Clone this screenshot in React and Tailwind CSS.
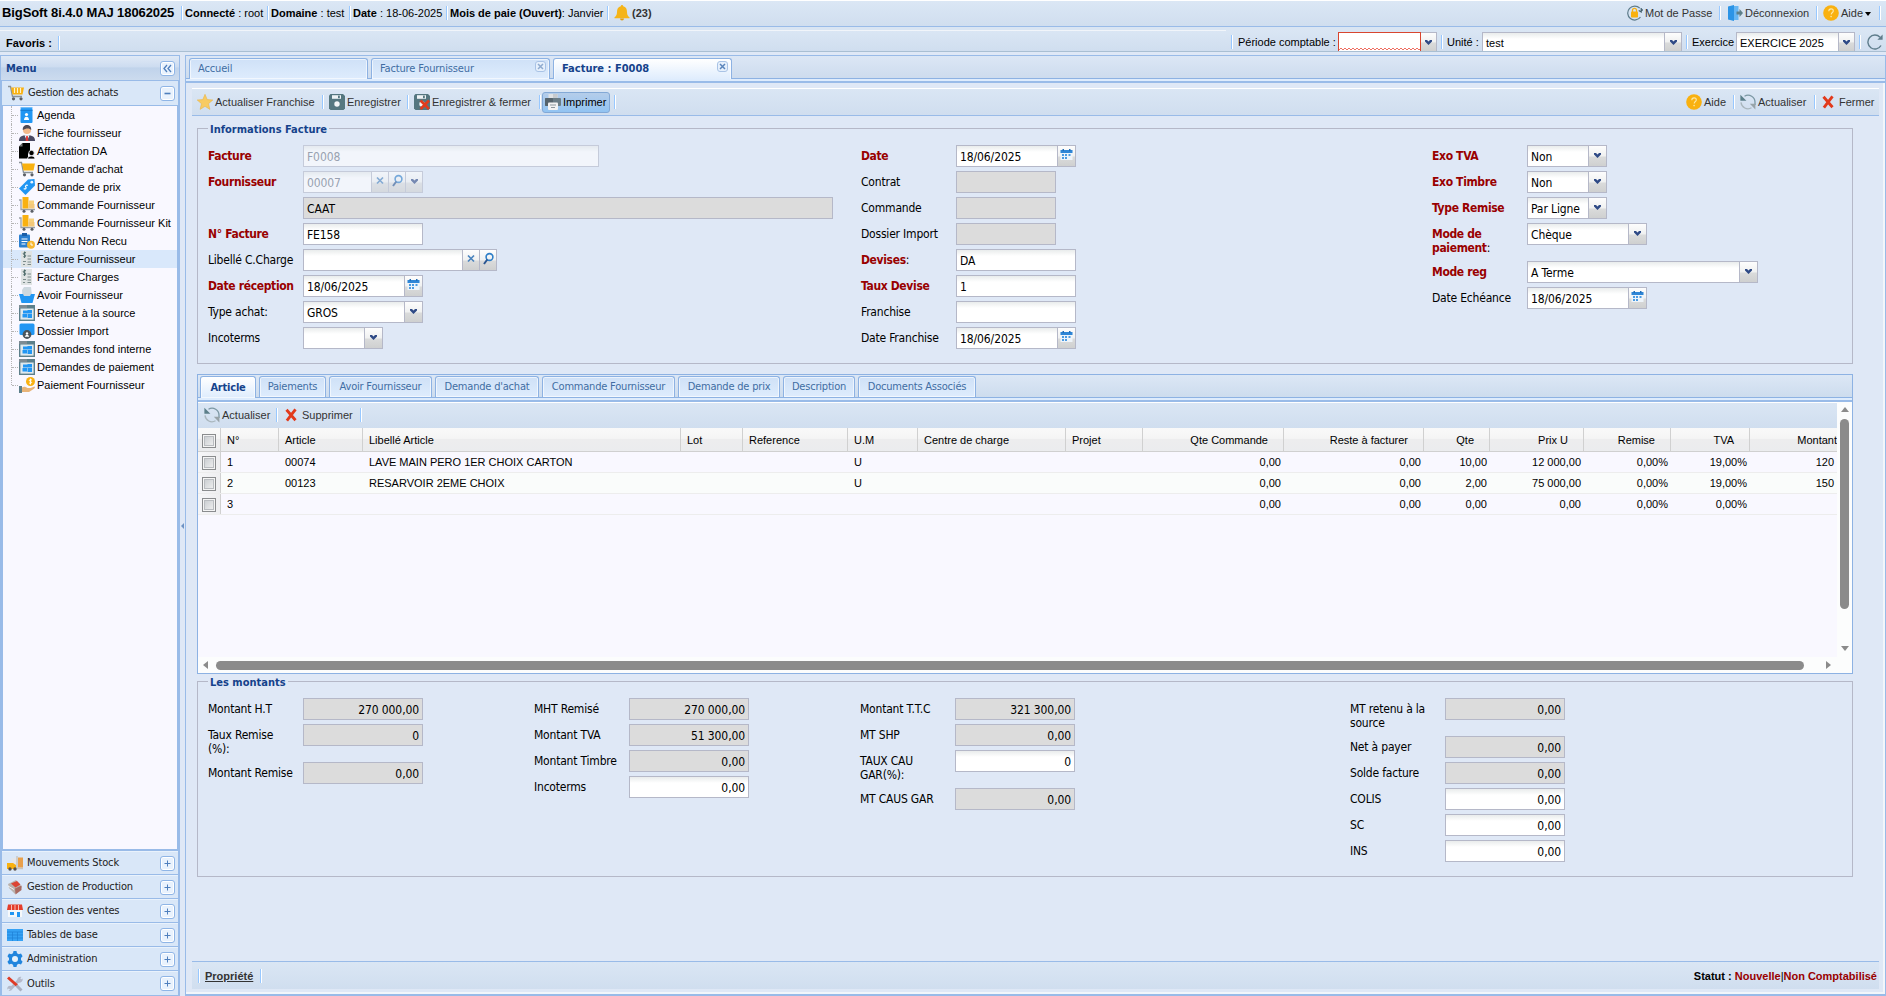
import React, { useState } from "react";

const TAHOMA = "font-['DejaVu_Sans_Condensed','DejaVu_Sans',sans-serif]";

/* ---------- icons ---------- */

const Svg = ({ size = 16, children, className = "" }) => (
  <svg width={size} height={size} viewBox="0 0 16 16" className={`shrink-0 ${className}`} fill="none">
    {children}
  </svg>
);

const HelpIcon = () => (
  <Svg>
    <circle cx="8" cy="8" r="7.8" fill="#f9b110" />
    <path d="M5.8 6.2c0-1.5 1-2.3 2.3-2.3s2.2.8 2.2 2c0 1.5-2.1 1.7-2.1 3.5" stroke="#fde9a8" strokeWidth="1.1" />
    <circle cx="8.1" cy="11.6" r=".8" fill="#fde9a8" />
  </Svg>
);

const RefreshIcon = () => (
  <Svg>
    <path d="M4.5 2.2A7 7 0 0 1 15 8.6V11" stroke="#7b97a3" strokeWidth="1.3" />
    <path d="M.4.8v6h6z" fill="#5c7f8a" />
    <path d="M11.5 13.8A7 7 0 0 1 1 8.4" stroke="#a9b6bd" strokeWidth="1.3" />
    <path d="M15.4 15.4v-5.6h-5.6z" fill="#98a3a8" />
  </Svg>
);

const ReloadIcon = () => (
  <Svg>
    <path d="M14 11.5A7 7 0 1 1 13 3.2" stroke="#5f7d8c" strokeWidth="1.4" />
    <path d="M15.6.4v5.4h-5.2z" fill="#5f7d8c" />
  </Svg>
);

const CrossIcon = () => (
  <Svg className="w-3">
    <path d="M2 1l12 14M14 .5L2.500 15.500" stroke="#e23a1c" strokeWidth="3.800" />
  </Svg>
);

const StarIcon = () => (
  <Svg>
    <path d="M8 .3l2.2 5.3 5.6.4-4.3 3.7 1.4 5.7L8 12.3l-4.9 3.1 1.4-5.7L.2 6l5.6-.4z" fill="#f8cb62" stroke="#e9b64a" strokeWidth=".6" />
  </Svg>
);

const DiskIcon = ({ cross }) => (
  <Svg>
    <path d="M0 1.5L1.5 0H14l2 2v12.5L14.500 16h-13L0 14.500z" fill="#557780" />
    <rect x="3" y="1.2" width="9" height="3.6" fill="#eef3f5" />
    <rect x="9" y="1.6" width="1.800" height="2.600" fill="#557780" />
    <circle cx="8" cy="10" r="2.700" fill="#f2f5f6" />
    {cross && <path d="M6.500 6.500l8.500 8.500M15 6.500L6.500 15" stroke="#e23a1c" strokeWidth="2.600" />}
  </Svg>
);

const PrinterIcon = () => (
  <Svg>
    <rect x="3.500" y="0" width="9" height="5" fill="#dfe2e5" />
    <rect x="8" y="0" width="4.500" height="5" fill="#c7cbcf" />
    <rect x="0" y="4" width="16" height="8" rx="1" fill="#6b7d87" />
    <rect x="0" y="4" width="8" height="8" rx="1" fill="#56646d" />
    <rect x="3" y="8.500" width="10" height="7.500" rx="1" fill="#f3f3f3" />
    <path d="M5 11h6M6 13.500h4" stroke="#8d979e" />
  </Svg>
);

const LockIcon = () => (
  <Svg>
    <path d="M12.800 3.200A7 7 0 1 0 13.500 12" stroke="#5f7d8c" strokeWidth="1.200" />
    <path d="M14.200 3v4l-2.500-1.500M14.200 6l1.600-1.500" stroke="#44606e" strokeWidth="1.200" />
    <rect x="4" y="6.500" width="7" height="6" rx=".8" fill="#f9b110" />
    <path d="M5.500 7V5.300a2 2 0 0 1 4 0V7" stroke="#f9b110" strokeWidth="1.300" />
  </Svg>
);

const ExitIcon = () => (
  <Svg>
    <path d="M1 1.500L7 0v16l-6-1.500z" fill="#2b94e6" />
    <path d="M7 1h4.500v14H7z" fill="#67b6f2" />
    <path d="M9.500 6.500h3V4l3.500 4-3.500 4V9.500h-3z" fill="#5c7f8a" />
  </Svg>
);

const BellIcon = () => (
  <Svg>
    <path d="M8 0c.8 0 1.200.6 1.200 1.300C12 2 13 4.200 13 7c0 3 1 4.200 2.500 5.300v.9H.5v-.9C2 11.200 3 10 3 7c0-2.800 1-5 3.800-5.700C6.800.6 7.200 0 8 0z" fill="#f5b418" />
    <path d="M6 13.500h4a2 2 0 0 1-4 0z" fill="#e39c0c" />
  </Svg>
);

const CartIcon = ({ open }) => (
  <Svg>
    <path d="M0 1.500h2.500l2 10H14" stroke="#8a9298" strokeWidth="1.300" />
    <path d="M3 2.500h13l-1.500 7H4.500z" fill="#f9b110" />
    {open && <path d="M6.500 3v5M9.500 3v5M12.500 3v5" stroke="#fff2cc" strokeWidth="1.200" />}
    <circle cx="5.500" cy="13.800" r="1.600" fill="#5b5f66" />
    <circle cx="13" cy="13.800" r="1.600" fill="#5b5f66" />
  </Svg>
);

const AgendaIcon = () => (
  <Svg>
    <rect x="1.500" y="1" width="12" height="15" rx="1" fill="#2196f3" />
    <rect x="1.500" y="0" width="12" height="1.200" fill="#74bdf7" />
    <circle cx="7.500" cy="7.500" r="1.600" fill="#fff" />
    <path d="M5 13c0-4.500 5-4.500 5 0z" fill="#fff" />
    <path d="M1.500 3.500h12" stroke="#1777cc" strokeWidth=".8" />
  </Svg>
);

const PersonIcon = () => (
  <Svg>
    <circle cx="8" cy="5" r="4" fill="#f2b98b" />
    <path d="M3.800 5C3.500 1.500 5.500 0 8 0s4.500 1.500 4.200 5C11 3 7 2.800 3.800 5z" fill="#4f4a55" />
    <path d="M0 16c0-4.500 2.500-5.800 8-5.800s8 1.300 8 5.800z" fill="#4b4a63" />
    <path d="M5.500 10.300h5L8 16z" fill="#fff" />
    <path d="M7.200 11h1.600l.6 5H6.600z" fill="#e33a3a" />
  </Svg>
);

const AffectIcon = () => (
  <Svg>
    <path d="M3.500 0H11v8l-2 3v4.500H0V3.500z" fill="#000" />
    <path d="M0 3.500L3.500 0v3.500z" fill="#777" />
    <circle cx="12.500" cy="10" r="2.700" fill="#000" stroke="#f9f8ff" strokeWidth=".8" />
    <path d="M8.500 16c0-4 7.500-4 7.500 0z" fill="#000" stroke="#f9f8ff" strokeWidth=".8" />
  </Svg>
);

const TagIcon = () => (
  <Svg>
    <path d="M9 .5L15.500 0 16 6.500 6.500 16 0 9.500z" fill="#2196f3" />
    <circle cx="12.800" cy="3.200" r="1.400" fill="#e9f5ff" />
    <path d="M8.800 6.500c-1.500-1-3 .6-2 1.700s-.6 2.500-2 1.300" stroke="#fff" strokeWidth="1.200" />
  </Svg>
);

const OrderIcon = () => (
  <Svg>
    <path d="M0 3h2v9.500h14" stroke="#9aa0a6" strokeWidth="1.300" />
    <rect x="3.500" y="0" width="6" height="11.500" fill="#f9b110" />
    <rect x="10" y="3.500" width="5" height="3.500" fill="#f6d07c" />
    <rect x="9.500" y="7" width="6" height="4.500" fill="#f3c87a" />
    <circle cx="5" cy="14.300" r="1.500" fill="#5b5f66" />
    <circle cx="13" cy="14.300" r="1.500" fill="#5b5f66" />
  </Svg>
);

const AttenduIcon = () => (
  <Svg>
    <rect x="0" y="1.500" width="11" height="13" rx="1" fill="#2b7fd0" />
    <rect x="3" y="0" width="5" height="3" fill="#1d5fa8" />
    <path d="M2.500 6h6M2.500 8.500h6M2.500 11h4" stroke="#fff" strokeWidth="1.100" />
    <circle cx="12" cy="11.800" r="4" fill="#f7b731" />
    <path d="M12 9.500v2.500h2" stroke="#fff" />
  </Svg>
);

const BillIcon = () => (
  <Svg>
    <rect x="2" y="0" width="11" height="16" fill="#dfe3e3" />
    <path d="M7 1.800c-3-1-3.600 1.700-1.500 2s1.500 2.700-1.200 1.900M5.600.5v6.500" stroke="#4e6b6b" strokeWidth="1" />
    <path d="M8.500 5H12M8.500 8H12M8.500 11H12M8.500 13.500H12M4 10.500h3M4 13.500h2" stroke="#7c8c8c" />
  </Svg>
);

const BasketIcon = () => (
  <Svg>
    <path d="M5 0h7l1 9H3.500L3 3z" fill="#cdd8df" />
    <path d="M0 7h4l1 2h6l1-2h4l-2.500 9h-11z" fill="#2196f3" />
  </Svg>
);

const WindowIcon = () => (
  <Svg>
    <rect x=".7" y=".7" width="14.600" height="14.600" fill="#dfe9ee" stroke="#5c7f8a" strokeWidth="1.400" />
    <rect x="0" y="0" width="16" height="3.500" fill="#5c7f8a" />
    <rect x="0" y="0" width="8" height="3" fill="#7d8b93" />
    <path d="M4 5.500h4.500v3H4zM8.500 5h4.500v3.500H8.500zM3.500 9h4.500v3.500H3.500zM8.500 9h4.500v4H8.500z" fill="#2196f3" />
  </Svg>
);

const DossierIcon = () => (
  <Svg>
    <rect x=".5" y=".5" width="15" height="11.500" rx="1.500" fill="#2196f3" />
    <circle cx="8" cy="11.500" r="4.400" fill="#4a545c" />
    <circle cx="8" cy="10.500" r="1.200" fill="#fff" />
    <path d="M5.800 13.800c0-2.500 4.400-2.500 4.400 0z" fill="#fff" />
  </Svg>
);

const PayIcon = () => (
  <Svg>
    <circle cx="11.500" cy="4.500" r="4.500" fill="#f9b110" />
    <path d="M13 3c-3-1.200-3.500 1-1.500 1.500s1.200 2.500-1.500 1.500M11.500 1.500v6" stroke="#fff" strokeWidth=".9" />
    <rect x="0" y="9" width="3" height="7" fill="#5c7f8a" />
    <path d="M3 10.500c2-1.500 4-.5 5.500.5h3l4-1.500c.8.500.5 1.500-.5 2.200L10 15H3z" fill="#e8b478" />
  </Svg>
);

const StockIcon = () => (
  <Svg>
    <path d="M4.500 3h5v6h-5z" fill="#e4e6ea" />
    <path d="M0 8h6l3 2v4H0z" fill="#f9b110" />
    <path d="M10 1v12.500h6" stroke="#c7c3bd" strokeWidth="1.400" />
    <path d="M11 2.500h5v10h-5z" fill="#e8a04c" />
    <circle cx="3" cy="14" r="1.700" fill="#5b5148" />
    <circle cx="8" cy="14" r="1.700" fill="#5b5148" />
  </Svg>
);

const ProductionIcon = () => (
  <Svg>
    <path d="M1 5l8-4 6 7-7 7-6-6z" fill="#b9b2ad" />
    <path d="M4 4.500l6-2.500 3.500 3.500-5 3z" fill="#dc4432" />
    <path d="M8 9.500l6.500-3V11l-6 4.500z" fill="#a96a60" />
    <path d="M1 7l6 3.500" stroke="#f2f2f2" />
  </Svg>
);

const ShopIcon = () => (
  <Svg>
    <path d="M1 1.500h14L16 7H0z" fill="#e43d2a" />
    <path d="M4.500 2v5M8 2v5M11.500 2v5" stroke="#fbe0dc" strokeWidth=".8" />
    <path d="M1 7h14v7H1z" fill="#f6f8fa" />
    <rect x="3" y="9" width="4" height="3" fill="#2196f3" />
    <rect x="10" y="9" width="3" height="5" fill="#2196f3" />
  </Svg>
);

const TableIcon = () => (
  <Svg>
    <rect x="0" y="2" width="16" height="12" fill="#35a2f5" />
    <path d="M0 5h16M0 8h16M0 11h16M5.500 5v9M10.500 5v9" stroke="#1c7fd6" strokeWidth=".7" />
  </Svg>
);

const GearIcon = () => (
  <Svg>
    <path
      d="M6.500 0h3l.5 2.200 1.800 1 2.200-.7 1.600 2.700L14 6.900v2.200l1.600 1.700-1.600 2.700-2.200-.7-1.800 1-.5 2.200h-3L6 13.800l-1.800-1-2.200.7L.4 10.800 2 9.100V6.900L.4 5.200 2 2.500l2.200.7 1.800-1z"
      fill="#2185dd"
    />
    <circle cx="8" cy="8" r="3" fill="#e6f1fb" />
  </Svg>
);

const ToolsIcon = () => (
  <Svg>
    <path d="M13.500 2.500L3 13.500" stroke="#b4b9c9" strokeWidth="3" />
    <path d="M10.500 5.500c-1-3 1.500-5.500 4-4.500l-2.500 2.500 1 1 2.500-2c1 2.500-2 5-4.500 4zM5 10.500c1 2.500-1 5-3.500 4.500l2-2-1-1L.4 13.600c-.8-2.600 2-5 4.600-3.100z" fill="#b4b9c9" />
    <path d="M1 1.500l9 8" stroke="#df3a24" strokeWidth="3" />
    <path d="M9.500 9.500l5 5" stroke="#a9afc0" strokeWidth="3" />
  </Svg>
);

/* ---------- data ---------- */

const menuItems = [
  { label: "Agenda", icon: <AgendaIcon /> },
  { label: "Fiche fournisseur", icon: <PersonIcon /> },
  { label: "Affectation DA", icon: <AffectIcon /> },
  { label: "Demande d'achat", icon: <CartIcon /> },
  { label: "Demande de prix", icon: <TagIcon /> },
  { label: "Commande Fournisseur", icon: <OrderIcon /> },
  { label: "Commande Fournisseur Kit", icon: <OrderIcon /> },
  { label: "Attendu Non Recu", icon: <AttenduIcon /> },
  { label: "Facture Fournisseur", icon: <BillIcon /> },
  { label: "Facture Charges", icon: <BillIcon /> },
  { label: "Avoir Fournisseur", icon: <BasketIcon /> },
  { label: "Retenue à la source", icon: <WindowIcon /> },
  { label: "Dossier Import", icon: <DossierIcon /> },
  { label: "Demandes fond interne", icon: <WindowIcon /> },
  { label: "Demandes de paiement", icon: <WindowIcon /> },
  { label: "Paiement Fournisseur", icon: <PayIcon /> },
];

const sections = [
  { label: "Mouvements Stock", icon: <StockIcon /> },
  { label: "Gestion de Production", icon: <ProductionIcon /> },
  { label: "Gestion des ventes", icon: <ShopIcon /> },
  { label: "Tables de base", icon: <TableIcon /> },
  { label: "Administration", icon: <GearIcon /> },
  { label: "Outils", icon: <ToolsIcon /> },
];

const detailTabs = [
  { label: "Article", width: "w-[56px]" },
  { label: "Paiements", width: "w-[67px]" },
  { label: "Avoir Fournisseur", width: "w-[103px]" },
  { label: "Demande d'achat", width: "w-[104px]" },
  { label: "Commande Fournisseur", width: "w-[133px]" },
  { label: "Demande de prix", width: "w-[102px]" },
  { label: "Description", width: "w-[72px]" },
  { label: "Documents Associés", width: "w-[118px]" },
];

const headers = ["N°", "Article", "Libellé Article", "Lot", "Reference", "U.M", "Centre de charge", "Projet"];
const numHeaders = ["Qte Commande", "Reste à facturer", "Qte", "Prix U", "Remise", "TVA"];

const rows = [
  {
    text: ["1", "00074", "LAVE MAIN PERO 1ER CHOIX CARTON", "", "", "U", "", ""],
    nums: ["0,00", "0,00", "10,00", "12 000,00", "0,00%", "19,00%", "120"],
  },
  {
    text: ["2", "00123", "RESARVOIR 2EME CHOIX", "", "", "U", "", ""],
    nums: ["0,00", "0,00", "2,00", "75 000,00", "0,00%", "19,00%", "150"],
  },
  {
    text: ["3", "", "", "", "", "", "", ""],
    nums: ["0,00", "0,00", "0,00", "0,00", "0,00%", "0,00%", ""],
  },
];

const GRID =
  "grid grid-cols-[23px_58px_84px_318px_62px_105px_70px_148px_77px_141px_140px_66px_94px_87px_79px_87px]";

/* ---------- small parts ---------- */

const Sep = ({ className = "" }) => (
  <span className={`h-[14px] w-[2px] shrink-0 border-l border-[#98c8ff] bg-white ${className}`} />
);

const ToolButton = ({ icon, children, className = "" }) => (
  <button className={`flex h-[21px] shrink-0 items-center gap-[2px] whitespace-nowrap text-[#333] ${className}`}>
    {icon}
    <span>{children}</span>
  </button>
);

const PanelTool = ({ children }) => (
  <span className="flex size-[15px] shrink-0 items-center justify-center rounded-[3px] border border-[#8fb5e6] bg-[#e9f2fd] shadow-[inset_0_0_0_1px_#fff]">
    <svg width="11" height="11" viewBox="0 0 11 11" fill="none" stroke="#4f7fbd" strokeWidth="1">
      {children}
    </svg>
  </span>
);

const Trigger = ({ type, className = "h-full w-[18px]" }) => (
  <span
    className={`flex shrink-0 items-start justify-center border-l border-[#b5b8c8] bg-[linear-gradient(#fdfdfd,#f0f1f1_50%,#dadbdb_55%,#cfd0d0)] pt-[2px] ${className}`}
  >
    {type === "down" && (
      <svg width="9" height="14" viewBox="0 0 9 14">
        <path d="M1 5h2l1.500 1.500L6 5h2v1.500L4.500 10 1 6.500z" fill="#2f4a86" />
      </svg>
    )}
    {type === "clear" && (
      <svg width="8" height="14" viewBox="0 0 8 14">
        <path d="M1 3.500l6 6M7 3.500l-6 6" stroke="#4a83bd" strokeWidth="1.700" />
      </svg>
    )}
    {type === "search" && (
      <svg width="13" height="14" viewBox="0 0 13 14" fill="none">
        <circle cx="7.500" cy="5" r="3.400" stroke="#2f7fc8" strokeWidth="1.600" />
        <path d="M5.300 7.500L2 12" stroke="#2a5590" strokeWidth="2" />
      </svg>
    )}
    {type === "date" && (
      <svg width="13" height="14" viewBox="0 0 13 14">
        <rect x=".5" y="2" width="12" height="10" fill="#eef4fa" />
        <rect x=".5" y="2" width="12" height="3" fill="#2f86d6" />
        <path d="M2.500 1h1.500v2H2.500zM9 1h1.500v2H9z" fill="#1f6cb8" />
        <path d="M2 6h2v2H2zM5 6h2v2H5zM8.500 6h2v2h-2zM2 9h2v2H2zM5 9h2v2H5z" fill="#4b9be2" />
      </svg>
    )}
  </span>
);

const Input = ({ value = "", width = "w-[120px]", grey, right, disabled, triggers = [] }) => (
  <div
    className={`flex h-[22px] shrink-0 border border-[#b5b8c8] ${width} ${disabled ? "opacity-60" : ""} ${
      grey ? "bg-[#dcdcdc]" : "bg-[linear-gradient(#e9ecec,#fff_6px)]"
    }`}
  >
    <span
      className={`grow overflow-hidden px-[3px] pt-[2px] text-[12px] leading-[18px] tracking-[-0.1px] whitespace-nowrap ${
        right ? "text-right" : ""
      } ${disabled ? "text-gray-500" : "text-black"}`}
    >
      {value}
    </span>
    {triggers.map((type) => (
      <Trigger key={type} type={type} className={triggers.length > 1 ? "h-full w-[17px]" : "h-full w-[18px]"} />
    ))}
  </div>
);

const Row = ({ label, required, colon, tall, children }) => (
  <div className={`mb-1 flex items-start ${tall ? "h-[34px]" : "h-[22px]"}`}>
    <div
      className={`w-[95px] shrink-0 pt-1 text-[12px] leading-[14px] ${tall ? "pr-[12px]" : "whitespace-nowrap"} ${
        required ? "tracking-[-0.35px]" : "tracking-[-0.2px]"
      }`}
    >
      <span className={required ? "font-bold text-[#990000]" : "text-black"}>{label}</span>
      {colon && ":"}
    </div>
    {children}
  </div>
);

const FieldSet = ({ title, className = "", children }) => (
  <section className={`relative flex border border-[#b5b8c8] pt-4 pl-[10px] ${TAHOMA} ${className}`}>
    <h2 className="absolute -top-[7px] left-[10px] bg-[#dfe8f6] px-[2px] text-[11px] leading-4 font-bold text-[#15428b]">{title}</h2>
    {children}
  </section>
);

const CheckBox = () => (
  <span className="block size-[14px] border border-[#8a8c8e] bg-[linear-gradient(135deg,#c4c8cc,#f4f4f4)] shadow-[inset_0_0_0_1px_#f4f4f4,inset_0_0_0_2px_#b9bcc0]" />
);

/* ---------- page sections ---------- */

const TopBar = () => (
  <header className="flex h-[27px] items-center border-t border-b border-t-white border-b-[#99bbe8] bg-linear-to-b from-[#dbe7f5] to-[#d0deef] pb-[1px] whitespace-nowrap text-black">
    <div className="w-[181px] pl-[2px] text-[13px] font-bold tracking-[-0.1px]">BigSoft 8i.4.0 MAJ 18062025</div>
    <Sep />
    <div className="w-[84px] pl-[2px]"><b>Connecté</b> : root</div>
    <Sep />
    <div className="w-[80px] pl-[2px]"><b>Domaine</b> : test</div>
    <Sep />
    <div className="w-[95px] pl-[2px]"><b>Date</b> : 18-06-2025</div>
    <Sep />
    <div className="w-[159px] pl-[2px]"><b>Mois de paie (Ouvert)</b>: Janvier</div>
    <Sep />
    <div className="flex items-center gap-[2px] pl-[5px] font-bold text-[#333]"><BellIcon />(23)</div>
    <div className="ml-auto flex items-center">
      <ToolButton className="w-[92px]" icon={<LockIcon />}>Mot de Passe</ToolButton>
      <Sep />
      <ToolButton className="w-[95px] pl-[6px]" icon={<ExitIcon />}>Déconnexion</ToolButton>
      <Sep />
      <ToolButton className="w-[61px] pl-[5px]" icon={<HelpIcon />}>
        Aide
        <span className="ml-[2px] inline-block border-x-[3px] border-t-[4px] border-x-transparent border-t-black align-middle" />
      </ToolButton>
      <Sep className="mr-[5px]" />
    </div>
  </header>
);

const FavoriteBar = () => (
  <div className="flex h-[25px] items-end border-b border-[#a9bfd3] bg-[#d9e5f3]">
    <div className="flex h-[21px] w-[1226px] items-center border-t border-white/70 bg-linear-to-b from-[#dae6f4] to-[#d0deef] pt-[4px]">
      <b className="w-[58px] pl-[6px] text-black">Favoris :</b>
      <Sep />
    </div>
    <div className="flex h-[21px] grow items-center bg-linear-to-b from-[#dae6f4] to-[#d0deef] pt-[2px] whitespace-nowrap text-black">
      <Sep className="ml-[5px]" />
      <span className="w-[105px] pl-[5px]">Période comptable :</span>
      <div className="flex h-[19px] w-[83px] items-end self-end border border-b-0 border-[#d8452f] bg-white">
        <svg width="81" height="4" viewBox="0 0 81 4" fill="none">
          <path d={"M0 3" + "l2-2 2 2".repeat(21)} stroke="#ee6f62" />
        </svg>
      </div>
      <Trigger type="down" className="h-[19px] w-[16px] self-end border-t border-r border-l-0" />
      <Sep className="ml-1" />
      <span className="w-[39px] pl-1">Unité :</span>
      <span className="h-[19px] w-[183px] self-end border border-b-0 border-[#b5b8c8] bg-[linear-gradient(#e9ecec,#fff_6px)] pl-[3px] leading-[20px]">test</span>
      <Trigger type="down" className="h-[19px] w-[17px] self-end border-t border-r border-l-0" />
      <Sep className="ml-1" />
      <span className="w-[48px] pl-[4px]">Exercice</span>
      <span className="h-[19px] w-[103px] self-end border border-b-0 border-[#b5b8c8] bg-[linear-gradient(#e9ecec,#fff_6px)] pl-[3px] leading-[20px]">EXERCICE 2025</span>
      <Trigger type="down" className="h-[19px] w-[16px] self-end border-t border-r border-l-0" />
      <Sep className="mr-[6px] ml-1" />
      <ReloadIcon />
    </div>
  </div>
);

const SideMenu = () => {
  const [selected, setSelected] = useState("Facture Fournisseur");
  return (
    <aside className="flex h-[941px] w-[180px] shrink-0 flex-col border border-[#99bbe8] bg-[#99bbe8] text-[#222]">
      <div className={`flex h-[25px] shrink-0 items-center justify-between border-b border-[#99bbe8] bg-[linear-gradient(#dfe9f6,#cddcf0_45%,#c0d3eb_50%,#ccdbee)] pt-[1px] pr-1 pl-[5px] ${TAHOMA}`}>
        <b className="text-[#15428b]">Menu</b>
        <PanelTool>
          <path d="M5 2L2 5.500 5 9M9 2L6 5.500 9 9" strokeWidth="1.300" />
        </PanelTool>
      </div>
      <div className={`mx-[1px] mb-[1px] flex h-[24px] shrink-0 items-center bg-[#d9e7f8] pr-[3px] pl-[6px] ${TAHOMA}`}>
        <CartIcon open />
        <span className="ml-1 grow tracking-[-0.25px]">Gestion des achats</span>
        <PanelTool><path d="M2.500 5.500h6" strokeWidth="1.600" /></PanelTool>
      </div>
      <ul className="mx-[2px] mb-[2px] w-[174px] grow bg-[#f9f8ff] text-black">
        {menuItems.map((item, i) => (
          <li
            key={item.label}
            onClick={() => setSelected(item.label)}
            className={`flex h-[18px] items-center pl-2 whitespace-nowrap ${selected === item.label ? "bg-[#d9e8fb]" : ""}`}
          >
            <span className={`w-px self-start border-l border-dotted border-[#b5b5b5] ${i === menuItems.length - 1 ? "h-[9px]" : "h-[18px]"}`} />
            <span className="mr-[1px] w-[6px] border-t border-dotted border-[#b5b5b5]" />
            {item.icon}
            <span className="ml-[2px]">{item.label}</span>
          </li>
        ))}
      </ul>
      {sections.map((s) => (
        <div
          key={s.label}
          className={`mx-[1px] flex h-[24px] shrink-0 items-center border-t border-b border-t-[#e9f2fc] border-b-[#99bbe8] bg-[#d9e7f8] pr-[3px] pl-[5px] last:border-b-0 ${TAHOMA}`}
        >
          {s.icon}
          <span className="ml-1 grow tracking-[-0.15px]">{s.label}</span>
          <PanelTool><path d="M2.500 5.500h6M5.500 2.500v6" /></PanelTool>
        </div>
      ))}
    </aside>
  );
};

const PageTab = ({ label, active, closable }) => (
  <div
    className={`flex w-[179px] justify-between rounded-t-[3px] border border-b-0 border-[#8db2e3] pr-[3px] pl-[8px] text-[11px] shadow-[inset_0_0_0_1px_#ffffff99] ${
      active
        ? "h-[22px] bg-linear-to-b from-white to-[#deecfd] font-bold text-[#15428b]"
        : "h-[21px] bg-linear-to-b from-[#cfe1f7] to-[#deecfd] tracking-[-0.15px] text-[#416da3]"
    }`}
  >
    <span className="leading-[20px]">{label}</span>
    {closable && (
      <span className="mt-[2px] flex size-[11px] items-center justify-center rounded-[3px] border border-[#a9c3e6] bg-[#e6f0fc]">
        <svg width="7" height="7" viewBox="0 0 7 7">
          <path d="M1 1l5 5M6 1L1 6" stroke={active ? "#5b85bb" : "#8fabcf"} strokeWidth="1.500" />
        </svg>
      </span>
    )}
  </div>
);

const InvoiceForm = () => (
  <FieldSet title="Informations Facture" className="mt-3 h-[236px]">
    <div className="w-[653px]">
      <Row label="Facture" required><Input value="F0008" width="w-[296px]" disabled /></Row>
      <Row label="Fournisseur" required><Input value="00007" disabled triggers={["clear", "search", "down"]} /></Row>
      <Row label=""><Input value="CAAT" width="w-[530px]" grey /></Row>
      <Row label="N° Facture" required><Input value="FE158" /></Row>
      <Row label="Libellé C.Charge"><Input width="w-[194px]" triggers={["clear", "search"]} /></Row>
      <Row label="Date réception" required><Input value="18/06/2025" triggers={["date"]} /></Row>
      <Row label="Type achat:"><Input value="GROS" triggers={["down"]} /></Row>
      <Row label="Incoterms"><Input width="w-[80px]" triggers={["down"]} /></Row>
    </div>
    <div className="w-[571px]">
      <Row label="Date" required><Input value="18/06/2025" triggers={["date"]} /></Row>
      <Row label="Contrat"><Input width="w-[100px]" grey /></Row>
      <Row label="Commande"><Input width="w-[100px]" grey /></Row>
      <Row label="Dossier Import"><Input width="w-[100px]" grey /></Row>
      <Row label="Devises" required colon><Input value="DA" /></Row>
      <Row label="Taux Devise" required><Input value="1" /></Row>
      <Row label="Franchise"><Input /></Row>
      <Row label="Date Franchise"><Input value="18/06/2025" triggers={["date"]} /></Row>
    </div>
    <div>
      <Row label="Exo TVA" required><Input value="Non" width="w-[80px]" triggers={["down"]} /></Row>
      <Row label="Exo Timbre" required><Input value="Non" width="w-[80px]" triggers={["down"]} /></Row>
      <Row label="Type Remise" required><Input value="Par Ligne" width="w-[80px]" triggers={["down"]} /></Row>
      <Row label="Mode de paiement" required colon tall><Input value="Chèque" triggers={["down"]} /></Row>
      <Row label="Mode reg" required><Input value="A Terme" width="w-[231px]" triggers={["down"]} /></Row>
      <Row label="Date Echéance"><Input value="18/06/2025" triggers={["date"]} /></Row>
    </div>
  </FieldSet>
);

const ArticleGrid = () => (
  <div className="w-[1639px] overflow-hidden bg-[#f9f8ff] text-black">
    <div className="flex h-[26px] items-center border-t border-white bg-linear-to-b from-[#dae6f4] to-[#d0deef] pb-[1px] pl-[6px]">
      <ToolButton className="w-[72px]" icon={<RefreshIcon />}>Actualiser</ToolButton>
      <Sep />
      <ToolButton className="w-[82px] gap-[5px] pl-[7px]" icon={<CrossIcon />}>Supprimer</ToolButton>
      <Sep />
    </div>
    <div className={`${GRID} h-[24px] border-b border-[#d0d0d0] bg-[linear-gradient(#f9f9f9,#f5f5f5_45%,#ededee_50%,#ebecee)] leading-[24px] whitespace-nowrap`}>
      <div className="border-r border-[#d0d0d0] pt-[6px] pl-1"><CheckBox /></div>
      {headers.map((h) => (
        <div key={h} className="border-r border-[#d0d0d0] pl-[6px]">{h}</div>
      ))}
      {numHeaders.map((h) => (
        <div key={h} className="border-r border-[#d0d0d0] pr-[15px] text-right">{h}</div>
      ))}
      <div className="text-right">Montant</div>
    </div>
    {rows.map((row, i) => (
      <div
        key={row.text[0]}
        className={`${GRID} h-[21px] border-b border-[#ededed] leading-[20px] whitespace-nowrap ${i % 2 ? "bg-[#fafcfb]" : "bg-[#f9f8ff]"}`}
      >
        <div className="border-r border-[#d0d0d0] bg-linear-to-r from-[#f6f6f8] to-[#eeeef0] pt-[4px] pl-1"><CheckBox /></div>
        {row.text.map((t, j) => (
          <div key={j} className="pl-[6px]">{t}</div>
        ))}
        {row.nums.map((n, j) => (
          <div key={j} className="pr-[3px] text-right">{n}</div>
        ))}
      </div>
    ))}
  </div>
);

const DetailPanel = () => {
  const [tab, setTab] = useState("Article");
  return (
    <section className="mt-[10px] flex h-[300px] flex-col border border-[#8db2e3] bg-[#f9f8ff]">
      <div className="flex h-[23px] shrink-0 gap-[3px] border-b border-[#8db2e3] bg-linear-to-b from-[#dce7f5] to-[#cddcee] pt-[1px] pl-[2px]">
        {detailTabs.map((t) => (
          <button
            key={t.label}
            onClick={() => setTab(t.label)}
            className={`${t.width} ${TAHOMA} shrink-0 rounded-t-[3px] border border-b-0 border-[#8db2e3] text-[11px] leading-[20px] whitespace-nowrap shadow-[inset_0_0_0_1px_#ffffff99] ${
              tab === t.label
                ? "h-[22px] bg-linear-to-b from-white to-[#deecfd] font-bold tracking-[-0.2px] text-[#15428b]"
                : "h-[21px] bg-linear-to-b from-[#cfe1f7] to-[#deecfd] tracking-[-0.2px] text-[#416da3]"
            }`}
          >
            {t.label}
          </button>
        ))}
      </div>
      <div className="h-[4px] shrink-0 border-b-2 border-[#99bbe8] bg-[#deecfd]" />
      <div className="flex grow">
        <div className="flex w-[1639px] shrink-0 flex-col">
          <ArticleGrid />
          <div className="mt-auto flex h-[16px] items-center bg-[#fcfdfd] pl-[5px]">
            <span className="border-y-[4px] border-r-[5px] border-y-transparent border-r-[#8b8b8b]" />
            <span className="ml-[8px] h-[9px] w-[1588px] rounded-full bg-[#8b8b8b]" />
            <span className="ml-[22px] border-y-[4px] border-l-[5px] border-y-transparent border-l-[#8b8b8b]" />
          </div>
        </div>
        <div className="flex grow flex-col items-center bg-[#fcfdfd] pt-[5px]">
          <span className="border-x-[4px] border-b-[5px] border-x-transparent border-b-[#8b8b8b]" />
          <span className="mt-[7px] h-[190px] w-[9px] rounded-full bg-[#8b8b8b]" />
          <span className="mt-[37px] border-x-[4px] border-t-[5px] border-x-transparent border-t-[#8b8b8b]" />
        </div>
      </div>
    </section>
  );
};

const Amounts = () => (
  <FieldSet title="Les montants" className="mt-[7px] h-[196px]">
    <div className="w-[326px]">
      <Row label="Montant H.T"><Input value="270 000,00" grey right /></Row>
      <Row label="Taux Remise (%):" tall><Input value="0" grey right /></Row>
      <Row label="Montant Remise"><Input value="0,00" grey right /></Row>
    </div>
    <div className="w-[326px]">
      <Row label="MHT Remisé"><Input value="270 000,00" grey right /></Row>
      <Row label="Montant TVA"><Input value="51 300,00" grey right /></Row>
      <Row label="Montant Timbre"><Input value="0,00" grey right /></Row>
      <Row label="Incoterms"><Input value="0,00" right /></Row>
    </div>
    <div className="w-[490px]">
      <Row label="Montant T.T.C"><Input value="321 300,00" grey right /></Row>
      <Row label="MT SHP"><Input value="0,00" grey right /></Row>
      <Row label="TAUX CAU GAR(%):" tall><Input value="0" right /></Row>
      <Row label="MT CAUS GAR"><Input value="0,00" grey right /></Row>
    </div>
    <div>
      <Row label="MT retenu à la source" tall><Input value="0,00" grey right /></Row>
      <Row label="Net à payer"><Input value="0,00" grey right /></Row>
      <Row label="Solde facture"><Input value="0,00" grey right /></Row>
      <Row label="COLIS"><Input value="0,00" right /></Row>
      <Row label="SC"><Input value="0,00" right /></Row>
      <Row label="INS"><Input value="0,00" right /></Row>
    </div>
  </FieldSet>
);

function App() {
  return (
    <div className="flex h-[996px] w-[1886px] flex-col overflow-hidden bg-[#dfe8f6] font-['Liberation_Sans',Arial,sans-serif] text-[11px] leading-[14px]">
      <TopBar />
      <FavoriteBar />
      <div className="mt-[3px] flex grow">
        <SideMenu />
        <div className="flex w-[5px] shrink-0 items-center justify-center">
          <span className="border-y-[3px] border-r-[3px] border-y-transparent border-r-[#6f93c4]" />
        </div>
        <main className="flex h-[941px] w-[1701px] flex-col border border-b-2 border-[#99bbe8]">
          <nav className={`flex h-[23px] shrink-0 gap-[3px] border-b border-[#8db2e3] bg-linear-to-b from-[#dce7f5] to-[#cddcee] pt-[2px] pl-[3px] ${TAHOMA}`}>
            <PageTab label="Accueil" />
            <PageTab label="Facture Fournisseur" closable />
            <PageTab label="Facture : F0008" active closable />
          </nav>
          <div className="h-[4px] shrink-0 border-b-2 border-[#99bbe8] bg-[#deecfd]" />
          <div className="flex grow flex-col border-r-2 border-b-2 border-white/60 px-[6px] pt-[5px] pr-[4px] pb-[3px]">
            <div className="flex h-[28px] shrink-0 items-center border-t border-b border-t-white border-b-[#99bbe8] bg-linear-to-b from-[#dae6f4] to-[#d0deef] pl-[5px]">
              <ToolButton className="w-[125px]" icon={<StarIcon />}>Actualiser Franchise</ToolButton>
              <Sep />
              <ToolButton className="w-[83px] pl-[5px]" icon={<DiskIcon />}>Enregistrer</ToolButton>
              <Sep />
              <ToolButton className="w-[130px] pl-[5px]" icon={<DiskIcon cross />}>Enregistrer &amp; fermer</ToolButton>
              <Sep />
              <ToolButton
                className="mr-1 ml-[1px] w-[68px] rounded-[3px] border border-[#83a9d6] bg-linear-to-b from-[#b5cdea] to-[#92c4f2] pl-[2px] text-black"
                icon={<PrinterIcon />}
              >
                Imprimer
              </ToolButton>
              <Sep />
              <div className="ml-auto flex items-center">
                <ToolButton className="w-[47px]" icon={<HelpIcon />}>Aide</ToolButton>
                <Sep />
                <ToolButton className="w-[79px] pl-[5px]" icon={<RefreshIcon />}>Actualiser</ToolButton>
                <Sep />
                <ToolButton className="w-[63px] gap-[5px] pl-[6px]" icon={<CrossIcon />}>Fermer</ToolButton>
              </div>
            </div>
            <div className="ml-[5px] w-[1656px]">
              <InvoiceForm />
              <DetailPanel />
              <Amounts />
            </div>
            <footer className="mt-auto flex h-[28px] shrink-0 items-center border-t border-[#99bbe8] bg-linear-to-b from-[#dae6f4] to-[#d0deef] pr-[2px] pl-[6px] font-bold">
              <Sep />
              <span className="w-[60px] pl-[5px] text-[#333] underline">Propriété</span>
              <Sep />
              <span className="ml-auto text-[#990000]">
                <span className="text-black">Statut : </span>
                Nouvelle<span className="font-normal text-black">|</span>Non Comptabilisé
              </span>
            </footer>
          </div>
        </main>
      </div>
    </div>
  );
}

export default App;
